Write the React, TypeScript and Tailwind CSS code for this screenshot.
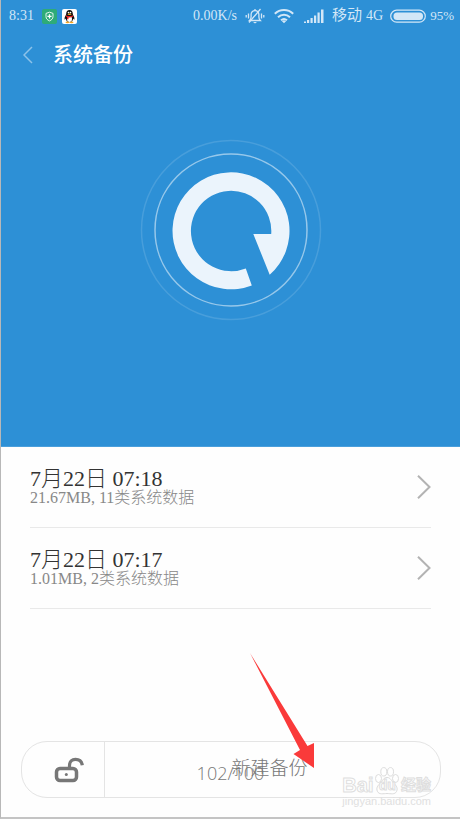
const backups = [
  { date: "7月22日 07:18", detail: "21.67MB, 11类系统数据" },
  { date: "7月22日 07:17", detail: "1.01MB, 2类系统数据" },
];

// 状态栏
function StatusBar() {
  return (
    <div className="flex h-8 items-center pl-2 pr-[6px] text-sm text-[#d3e7f7]">
      <span>8:31</span>
      <svg className="ml-2 h-[15px] w-[15px]" viewBox="0 0 15 15" aria-hidden="true">
        <rect width="15" height="15" rx="2" fill="#2eab78" />
        <path d="M7.5 3.2 11 4.4v3.3c0 2-1.4 3.3-3.5 4.2C5.4 11 4 9.7 4 7.7V4.4z" fill="none" stroke="#e4f6ed" strokeWidth="1" />
        <path d="M7.5 5.3v4.2M5.4 7.4h4.2" stroke="#fff" strokeWidth="1.3" />
      </svg>
      <svg className="ml-[5px] h-[15px] w-[15px]" viewBox="0 0 15 15" aria-hidden="true">
        <rect width="15" height="15" rx="2" fill="#fff" />
        <path d="M4.2 5C4.2 2.5 5.4 1 7.5 1s3.3 1.500 3.3 4c.3 1.500 1.900 3 1.700 5.400-.5.200-.9-.3-1.300-.9-.2 2.300-1.500 3.800-3.700 3.800S4 11.800 3.800 9.500c-.4.600-.8 1.100-1.300.9C2.300 8 3.900 6.500 4.200 5z" fill="#111" />
        <ellipse cx="7.5" cy="10" rx="2.5" ry="2.9" fill="#fff" />
        <circle cx="6.5" cy="3.6" r=".8" fill="#fff" />
        <circle cx="8.5" cy="3.6" r=".8" fill="#fff" />
        <ellipse cx="7.5" cy="5.2" rx="2" ry=".7" fill="#f5a623" />
        <path d="M4 6.200c2 1.200 5 1.200 7 0l.3 1.400C9.500 8.500 8 8.600 6.500 8.400v1.800H5V8c-.5-.2-1-.4-1.300-.6z" fill="#e32222" />
        <ellipse cx="5.4" cy="13.4" rx="1.9" ry=".8" fill="#f5a623" />
        <ellipse cx="9.6" cy="13.4" rx="1.9" ry=".8" fill="#f5a623" />
      </svg>
      <span className="ml-auto">0.00K/s</span>
      <svg className="ml-2 h-4 w-5" viewBox="0 0 20 16" fill="none" stroke="currentColor" aria-hidden="true">
        <path d="M4.500 12.500h10.800c-1-1-1.400-2-1.400-3.500V6.500c0-2.300-1.500-3.900-3.900-3.900S6.100 4.200 6.100 6.500V9c0 1.500-.5 2.500-1.600 3.500z" strokeWidth="1.3" />
        <path d="M10 1v1.500M15.500 1 4 14.500" strokeWidth="1.3" />
        <path d="M8 14h4l-2 1.600z" fill="currentColor" stroke="none" />
        <path d="M3.500 5.500v5M1.200 7v2.500M16.500 5.500v5M18.800 7v2.500" strokeWidth="1.3" />
      </svg>
      <svg className="ml-[9px] h-4 w-5" viewBox="0 0 20 16" fill="none" stroke="currentColor" strokeWidth="2" aria-hidden="true">
        <path d="M.8 5.800c5.200-5 13.200-5 18.400 0M4 9.200c3.500-3.300 8.500-3.300 12 0M7 12.300c1.800-1.500 4.200-1.500 6 0" />
        <path d="m7.800 13 2.200 2.300 2.200-2.300c-1.300-1-3.100-1-4.400 0z" fill="currentColor" stroke="none" />
      </svg>
      <svg className="ml-[10px] h-[14px] w-5" viewBox="0 0 20 14" fill="currentColor" aria-hidden="true">
        <path d="M0 12.500h2V14H0zM3 11h2.200v3H3zM6.500 9h2.200v5H6.500zM10 6.500h2.200V14H10zM13.500 3.500h2.200V14h-2.200zM17 .5h2.500V14H17z" />
      </svg>
      <span className="ml-2 text-[15px]">移动</span>
      <span className="ml-1">4G</span>
      <svg className="ml-[7px] h-[14px] w-9" viewBox="0 0 36 14" aria-hidden="true">
        <rect x=".7" y="1.2" width="34.6" height="12" rx="6" fill="none" stroke="currentColor" strokeWidth="1.2" />
        <rect x="3.5" y="3.5" width="29.5" height="7.5" rx="3.5" fill="currentColor" />
      </svg>
      <span className="ml-1 text-[13px]">95%</span>
    </div>
  );
}

// 中间的备份图标
function BackupLogo() {
  return (
    <svg className="mx-auto h-[182px] w-[182px]" viewBox="-91 -91 182 182" fill="none" aria-hidden="true">
      <circle r="89.5" stroke="#fff" strokeOpacity=".13" strokeWidth="1.5" />
      <circle r="76" stroke="#fff" strokeOpacity=".5" strokeWidth="1.5" />
      <path
        d="M20.800 55.500A58.500 58.500 0 1 1 38.700 44.700L22.300 4H40.200A40.200 40.200 0 1 0 14.800 38.400z"
        fill="#ebf4fc"
      />
    </svg>
  );
}

function Watermark() {
  return (
    <div className="pointer-events-none absolute bottom-[10px] right-[29px] font-['Liberation_Sans','Noto_Sans_CJK_SC',sans-serif] text-white">
      <div className="flex h-[29px] items-end justify-between [-webkit-text-stroke:1px_#dedede]">
        <span className="text-xl font-bold leading-5">Bai</span>
        <span className="relative flex h-7 w-6 items-end justify-center">
          <svg className="absolute inset-0 h-7 w-6" viewBox="0 0 24 28" fill="#fff" stroke="#dcdcdc" aria-hidden="true">
            <ellipse cx="3.5" cy="11.5" rx="3" ry="4" />
            <ellipse cx="8.8" cy="4.8" rx="3" ry="4.2" />
            <ellipse cx="15.5" cy="4.8" rx="3" ry="4.2" />
            <ellipse cx="20.5" cy="11.5" rx="3" ry="4" />
            <path d="M12 10.500c3.500 0 4.500 3.500 7 6 2.500 2.400 4 4.500 2.600 7.800C20 28 15.500 26.500 12 26.500S4 28 2.400 24.300C1 21 2.500 18.900 5 16.500c2.500-2.500 3.500-6 7-6z" />
          </svg>
          <span className="relative text-sm font-bold leading-5">du</span>
        </span>
        <span className="text-[15px] font-bold leading-5">经验</span>
      </div>
      <div className="text-[11px] leading-3 text-[#e0e0e0]">jingyan.baidu.com</div>
    </div>
  );
}

export default function App() {
  return (
    <div className="flex min-h-screen flex-col border-b-2 border-l border-b-[#c4c4c4] border-l-[#b8b8b8] bg-[#fefefe] font-['Liberation_Serif','Noto_Sans_CJK_SC',serif]">
      <header className="border-b border-[#4a9fdc] bg-[#2d90d6]">
        <StatusBar />
        <div className="flex h-[46px] items-center pl-[22px]">
          <button type="button" aria-label="返回" className="text-[#8dc2e9]">
            <svg className="h-[18px] w-[10px]" viewBox="0 0 10 18" fill="none" stroke="currentColor" strokeWidth="1.5">
              <path d="M9 1 1 9l8 8" />
            </svg>
          </button>
          <h1 className="ml-5 text-xl font-medium text-white">系统备份</h1>
        </div>
        <div className="pb-[125px] pt-[61px]">
          <BackupLogo />
        </div>
      </header>

      {/* 备份列表 */}
      <ul className="flex-1 px-[29px]">
        {backups.map((item) => (
          <li key={item.date} className="border-b border-[#e9e9e9]">
            <button type="button" className="flex h-20 w-full items-center justify-between text-left">
              <span className="pt-0.5">
                <span className="block text-[22px] font-light leading-5 text-[#333]">{item.date}</span>
                <span className="block text-base font-light leading-[18px] text-[#888]">{item.detail}</span>
              </span>
              <svg className="h-6 w-[14px] text-[#b3b3b3]" viewBox="0 0 14 24" fill="none" stroke="currentColor" strokeWidth="2" aria-hidden="true">
                <path d="m1 .8 11.500 11.200L1 23.200" />
              </svg>
            </button>
          </li>
        ))}
      </ul>

      <footer className="relative pb-[19px] pl-5 pr-[19px]">
        <div className="flex h-[57px] overflow-hidden rounded-[26px] border border-[#e4e4e4]">
          <button type="button" aria-label="锁定" className="flex w-[83px] items-center justify-center border-r border-[#e4e4e4] pl-3">
            <svg className="h-[26px] w-[30px]" viewBox="0 0 30 26" fill="none" stroke="#777" aria-hidden="true">
              <rect x="2.5" y="11.5" width="20" height="12" rx="3.5" strokeWidth="3.5" />
              <path d="M15.500 11V8.500c0-3.800 2.500-6.200 6-6.200 3.800 0 6.300 2.200 6.800 6" strokeWidth="3.2" />
              <circle cx="12.3" cy="17.5" r="1.5" fill="#777" stroke="none" />
            </svg>
          </button>
          <button type="button" className="flex-1 pr-[6px] text-[19px] font-light text-[#777]">
            新建备份
          </button>
        </div>
        <p className="pointer-events-none absolute inset-x-0 bottom-8 text-center font-['Open_Sans',sans-serif] text-lg font-light leading-6 text-[#777]">102/100</p>
        <svg className="pointer-events-none absolute bottom-[49px] left-[249px] h-[115px] w-[65px]" viewBox="0 0 65 115" fill="#fa3a3a" aria-hidden="true">
          <path d="M0 0 50 97l-6.500 4L64 115V90l-6.500 3z" />
        </svg>
        <Watermark />
      </footer>
    </div>
  );
}
